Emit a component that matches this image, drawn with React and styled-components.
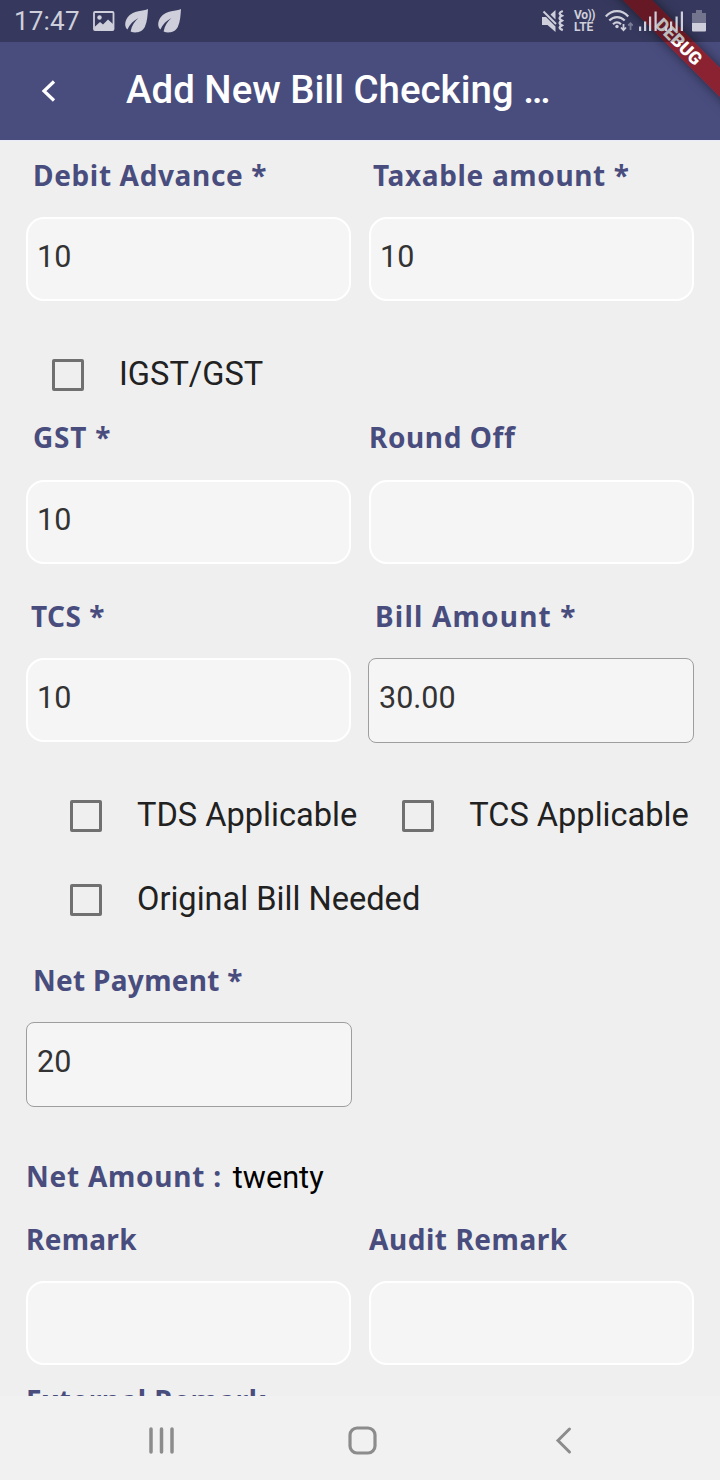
import styled, { createGlobalStyle } from "styled-components";

const GlobalStyle = createGlobalStyle`
  * {
    box-sizing: border-box;
  }
  body {
    margin: 0;
    background: #efefef;
    font-family: Roboto, "Liberation Sans", sans-serif;
  }
`;

const Screen = styled.div`
  display: flex;
  flex-direction: column;
  width: 720px;
  height: 1480px;
  overflow: hidden;
  background: #efefef;
`;

const Header = styled.header`
  position: relative;
  flex: none;
  height: 140px;
  overflow: hidden;
  background: #494d7e;
`;

const StatusBar = styled.div`
  position: relative;
  display: flex;
  align-items: center;
  justify-content: space-between;
  height: 42px;
  padding: 0 14px;
  background: rgba(0, 0, 0, 0.26);
  color: #cfcfdb;
`;

const StatusGroup = styled.div`
  display: flex;
  align-items: center;
  gap: ${(props) => props.$gap}px;
`;

const Clock = styled.span`
  width: 68px;
  margin-right: 1px;
  font-size: 26px;
  line-height: 42px;
  letter-spacing: 0.2px;
`;

const VoLte = styled.div`
  display: flex;
  flex-direction: column;
  width: 22px;
  margin-right: 9px;
  font-size: 12px;
  font-weight: 700;
  line-height: 12px;
  letter-spacing: -0.4px;
`;

const Lte = styled.span`
  letter-spacing: 0;
`;

const StatusIcon = styled.svg`
  display: block;
  flex: none;
  margin-right: ${(props) => props.$after || 0}px;
`;

const AppBar = styled.div`
  display: flex;
  align-items: center;
  height: 98px;
  padding-left: 40px;
`;

const Title = styled.h1`
  margin: 0 0 2px 68px;
  color: #fff;
  font-size: 38.45px;
  font-weight: 500;
  line-height: 46px;
  white-space: nowrap;
`;

const Ribbon = styled.div`
  position: absolute;
  top: 31px;
  right: -58.5px;
  width: 200px;
  height: 21px;
  transform: rotate(45deg);
  background: rgba(160, 20, 24, 0.75);
  box-shadow: 0 0 12px rgba(0, 0, 0, 0.5);
  color: #fff;
  font-size: 18px;
  font-weight: 900;
  line-height: 21px;
  text-align: center;
`;

const Form = styled.main`
  flex: 1;
  min-height: 0;
  overflow: hidden;
  padding: 17px 26px 0;
  border-top: 1px solid #ececf8;
`;

const FieldRow = styled.div`
  display: grid;
  grid-template-columns: 325px 325px;
  column-gap: 18px;
  margin-top: ${(props) => props.$top || 0}px;
`;

const Label = styled.div`
  height: 36px;
  padding-left: ${(props) => props.$indent || 0}px;
  color: #494d7e;
  font-family: "Noto Sans", "Open Sans", sans-serif;
  font-size: 28px;
  font-weight: 700;
  line-height: 34px;
  letter-spacing: ${(props) => props.$spacing || 0}px;
  white-space: nowrap;
`;

const Input = styled.input`
  display: block;
  width: ${(props) => (props.$locked ? 326 : 325)}px;
  height: ${(props) => (props.$locked ? 85 : 84)}px;
  margin: ${(props) => props.$gap || 23}px 0 ${(props) => (props.$locked ? -1 : 0)}px ${(props) => props.$shift || 0}px;
  padding: 0 ${(props) => (props.$locked ? 10 : 9)}px 6px;
  border: ${(props) => (props.$locked ? "1px solid #9e9e9e" : "2px solid #fff")};
  border-radius: ${(props) => (props.$locked ? 8 : 18)}px;
  outline: none;
  background: #f5f5f5;
  color: #333;
  font-family: Roboto, "Liberation Sans", sans-serif;
  font-size: 30.5px;
`;

const CheckRow = styled.div`
  display: flex;
  gap: 45px;
  margin-top: ${(props) => props.$top}px;
  padding-left: ${(props) => props.$left}px;
`;

const CheckLabel = styled.label`
  display: flex;
  align-items: center;
  gap: 35px;
  height: 32px;
  color: #212121;
  font-size: 32.6px;
  white-space: nowrap;
`;

const CheckBox = styled.span`
  flex: none;
  width: 32px;
  height: 32px;
  border: 3.5px solid #707070;
  border-radius: 2px;
`;

const CheckText = styled.span`
  margin-top: -2px;
`;

const NetAmount = styled.div`
  display: flex;
  gap: 11px;
  margin-top: 53px;
`;

const Words = styled.span`
  color: #000;
  font-size: 30.7px;
  line-height: 38px;
`;

const NavBar = styled.nav`
  display: flex;
  flex: none;
  align-items: center;
  height: 84px;
  padding: 5px 0 0 145px;
  gap: 169px;
  background: #f1f1f1;
`;

function Field({ label, indent, spacing, gap, value, locked, shift }) {
  return (
    <div>
      <Label $indent={indent} $spacing={spacing}>
        {label}
      </Label>
      <Input $locked={locked} $gap={gap} $shift={shift} defaultValue={value} readOnly={locked} />
    </div>
  );
}

function Check({ text }) {
  return (
    <CheckLabel>
      <CheckBox />
      <CheckText>{text}</CheckText>
    </CheckLabel>
  );
}

function Leaf() {
  return (
    <StatusIcon width='23' height='24' viewBox='0 0 23 24' fill='currentColor'>
      <path d='M23 0C19 2.500 8 .5 2.500 8.500C-.8 13.500-.3 18 2.400 20.500C4.500 15.500 8.500 11.500 13.500 9C9.500 12.500 6.800 16.500 5.600 22.500C10 24.500 17 23.500 19.800 18C22.500 12 22.500 6 23 0Z' />
    </StatusIcon>
  );
}

function StatusIcons() {
  return (
    <StatusGroup $gap={0}>
      <StatusIcon $after={10} width='22' height='24' viewBox='0 0 22 24' fill='currentColor'>
        <path d='M0 8h4l9.500 9.500V23L5.500 16H0ZM8.500 5.500L13.500 1v9.500Z' />
        <path d='M1.500 2.500L14 15' stroke='currentColor' strokeWidth='2' />
        <path
          d='M20.800 2c-4 1.600-4 3.200-1 4.800c-3 1.600-3 3.200 0 4.800c-3 1.600-3 3.200 0 4.800c-3 1.600-3 3.200 1 4.800'
          fill='none'
          stroke='currentColor'
          strokeWidth='2.400'
        />
      </StatusIcon>
      <VoLte>
        <span>Vo))</span>
        <Lte>LTE</Lte>
      </VoLte>
      <StatusIcon $after={6} width='28' height='22' viewBox='0 0 28 22' fill='none' stroke='currentColor' strokeWidth='2.200'>
        <path d='M.8 6.500C7-.6 17-.6 23.200 6.500M4.300 10.500c4.500-4.600 11-4.600 15.400 0M8 14.200c2.500-2.300 5.500-2.300 8 0' />
        <circle cx='12' cy='16.500' r='1.700' fill='currentColor' stroke='none' />
        <path d='M18.500 14v5.500M16 17.500l2.500 2.600l2.500-2.600' strokeWidth='1.800' />
        <path d='M25.500 20v-6M23.200 15.500l2.300-2.300l2.300 2.300' strokeWidth='1.800' opacity='.45' />
      </StatusIcon>
      <StatusIcon $after={9} width='44' height='20' viewBox='0 0 44 20' fill='currentColor'>
        <path d='M0 15.500h2.200V20H0ZM5 10.500h2.200V20H5ZM10 5.500h2.200V20H10ZM15.500 .5h2.200V20h-2.200Z' />
        <path d='M26 15.500h2.200V20H26ZM31 10.500h2.200V20H31ZM36.500 5.500h2.200V20h-2.200ZM41.800 .5H44V20h-2.200Z' />
      </StatusIcon>
      <StatusIcon width='14' height='22' viewBox='0 0 14 22' fill='currentColor'>
        <path d='M4 0h6v3h4v10H0V3h4Z' opacity='.4' />
        <path d='M0 13h14v7.500q0 1-1 1H1q-1 0-1-1Z' />
      </StatusIcon>
    </StatusGroup>
  );
}

function App() {
  return (
    <>
      <GlobalStyle />
      <Screen>
        <Header>
          <Ribbon>DEBUG</Ribbon>
          <StatusBar>
            <StatusGroup $gap={10}>
              <Clock>17:47</Clock>
              <StatusIcon width='22' height='20' viewBox='0 0 22 20'>
                <rect x='1' y='1' width='19.500' height='18' rx='1' fill='none' stroke='currentColor' strokeWidth='1.800' />
                <circle cx='6.500' cy='6.500' r='2.200' fill='currentColor' />
                <path d='M1.500 16l5.500-5l3 2.500L15 8.500l5.500 5V19h-19Z' fill='currentColor' />
              </StatusIcon>
              <Leaf />
              <Leaf />
            </StatusGroup>
            <StatusIcons />
          </StatusBar>
          <AppBar>
            <svg width='18' height='22' viewBox='0 0 18 22' fill='none' stroke='#fff' strokeWidth='3.200'>
              <path d='M14 1.500L4 11l10 9.500' />
            </svg>
            <Title>Add New Bill Checking …</Title>
          </AppBar>
        </Header>

        <Form>
          <FieldRow>
            <Field label='Debit Advance *' indent={7} spacing={0.65} value='10' />
            <Field label='Taxable amount *' indent={4} spacing={0.65} value='10' />
          </FieldRow>
          <CheckRow $top={58} $left={26}>
            <Check text='IGST/GST' />
          </CheckRow>
          <FieldRow $top={29}>
            <Field label='GST *' indent={7} spacing={0.8} gap={24} value='10' />
            <Field label='Round Off' spacing={0.6} gap={24} value='' />
          </FieldRow>
          <FieldRow $top={35}>
            <Field label='TCS *' indent={5} spacing={0.5} value='10' />
            <Field label='Bill Amount *' indent={6} spacing={1.2} value='30.00' locked shift={-1} />
          </FieldRow>
          <CheckRow $top={58} $left={44}>
            <Check text='TDS Applicable' />
            <Check text='TCS Applicable' />
          </CheckRow>
          <CheckRow $top={52} $left={44}>
            <Check text='Original Bill Needed' />
          </CheckRow>
          <FieldRow $top={47}>
            <Field label='Net Payment *' indent={7} spacing={0.3} value='20' locked />
          </FieldRow>
          <NetAmount>
            <Label $spacing={0.75}>Net Amount :</Label>
            <Words>twenty</Words>
          </NetAmount>
          <FieldRow $top={25}>
            <Field label='Remark' spacing={0.3} value='' />
            <Field label='Audit Remark' spacing={0.55} value='' />
          </FieldRow>
          <FieldRow $top={18}>
            <Field label='External Remark' spacing={0.5} value='' />
          </FieldRow>
        </Form>

        <NavBar>
          <svg width='32' height='30' viewBox='0 0 32 30' stroke='#8c8c8c' strokeWidth='3.500' strokeLinecap='round'>
            <path d='M6 3v23M16.500 3v23M27 3v23' />
          </svg>
          <svg width='32' height='30' viewBox='0 0 32 30' fill='none' stroke='#8c8c8c' strokeWidth='3.200'>
            <rect x='4' y='2' width='25' height='25' rx='7' />
          </svg>
          <svg width='32' height='30' viewBox='0 0 32 30' fill='none' stroke='#8c8c8c' strokeWidth='3' strokeLinecap='round'>
            <path d='M22.500 3L11 14.500L22.500 26' />
          </svg>
        </NavBar>
      </Screen>
    </>
  );
}

export default App;
